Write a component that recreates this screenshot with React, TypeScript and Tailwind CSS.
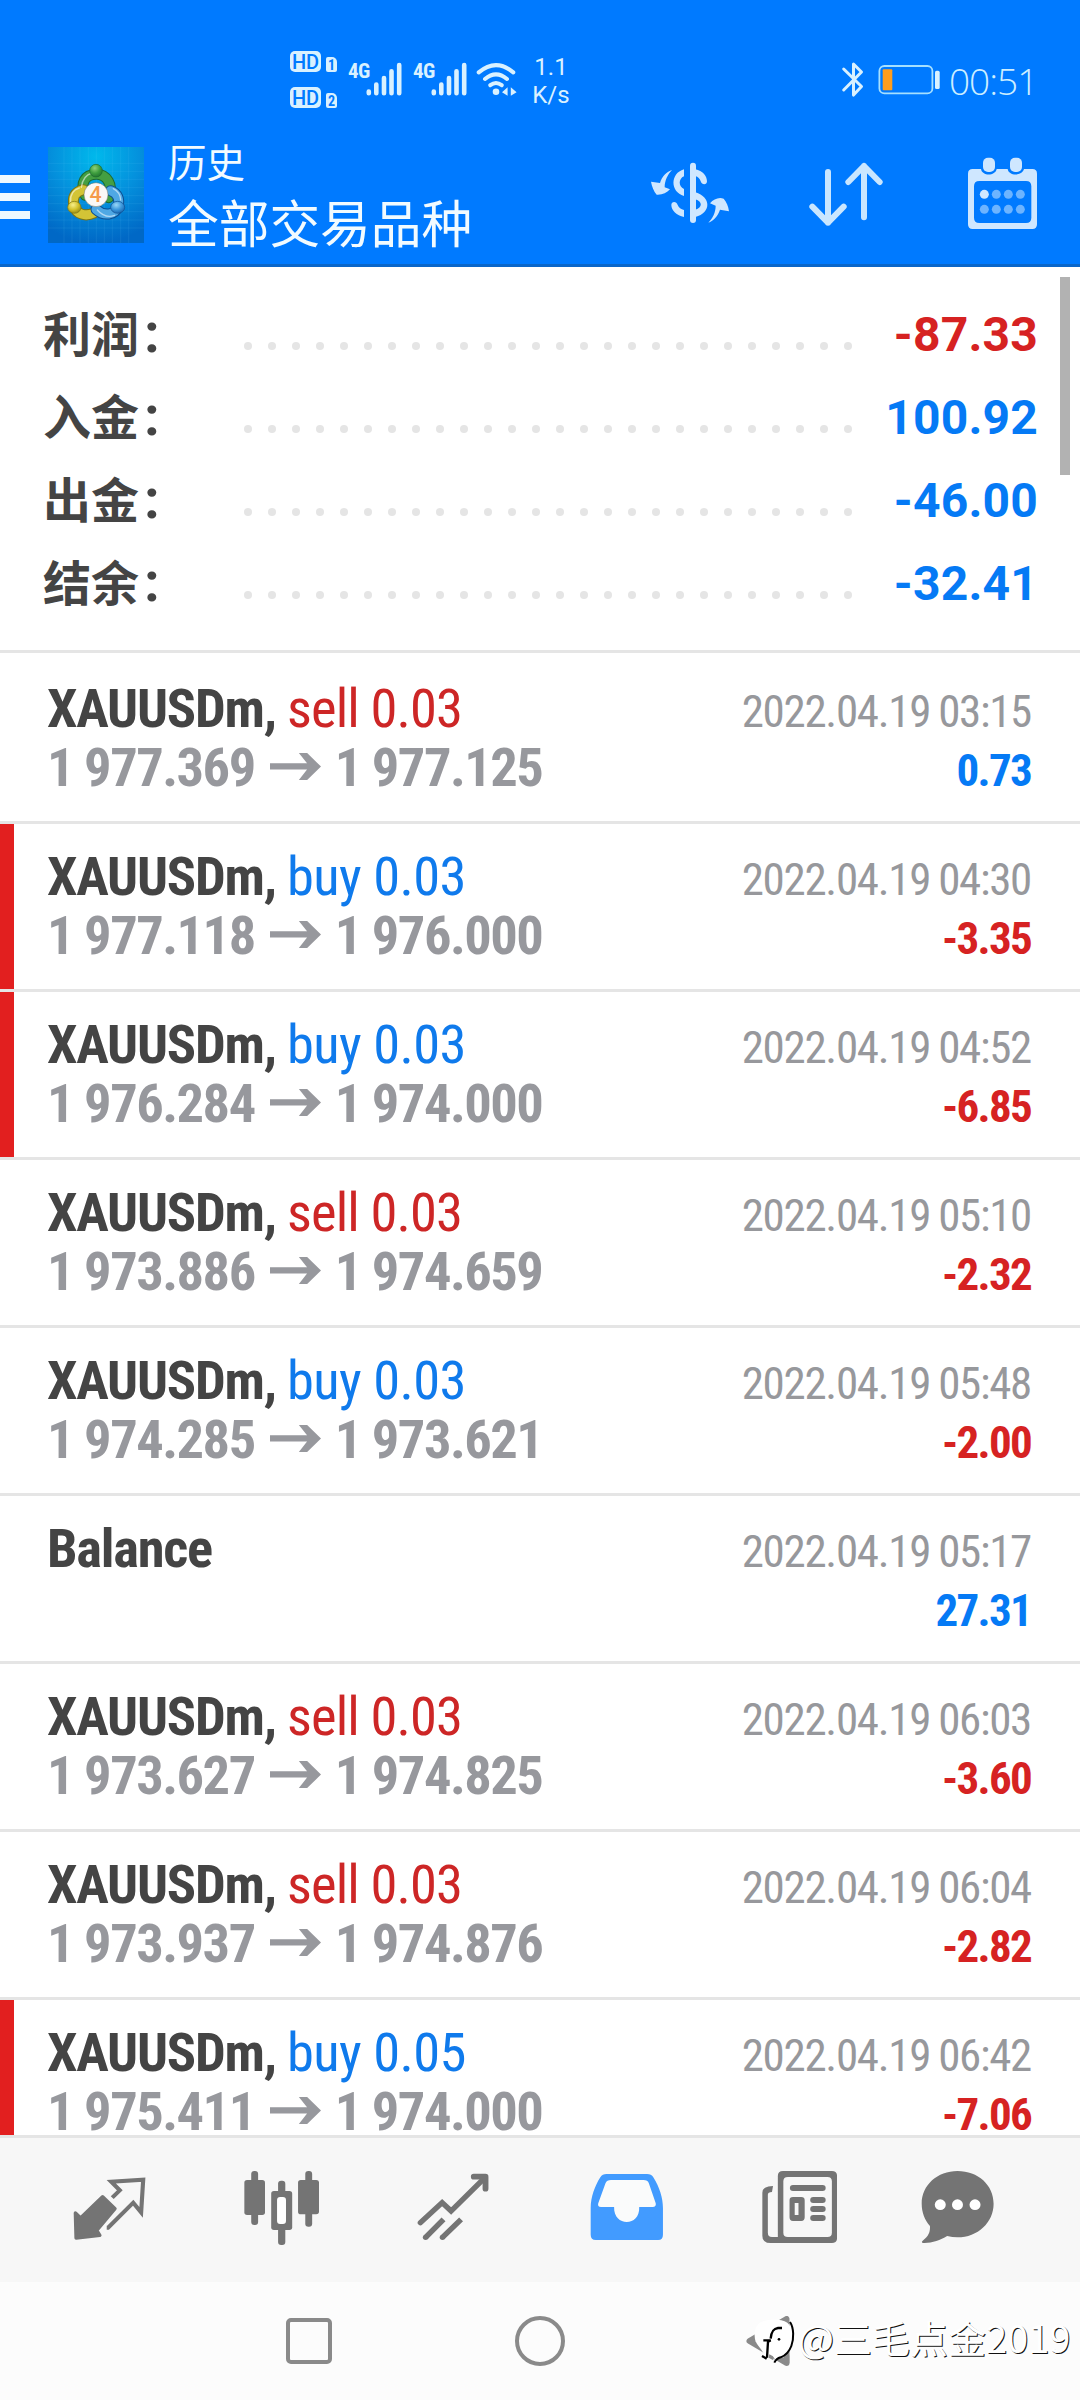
import React from 'react';
import clsx from 'clsx';

type Deal = {
  symbol: string;
  side?: 'buy' | 'sell';
  volume?: string;
  open?: string;
  close?: string;
  time: string;
  profit: string;
  stopped?: boolean;
};

const summary = [
  { label: '利润', value: '-87.33', loss: true },
  { label: '入金', value: '100.92', loss: false },
  { label: '出金', value: '-46.00', loss: false },
  { label: '结余', value: '-32.41', loss: false },
];

const deals: Deal[] = [
  { symbol: 'XAUUSDm', side: 'sell', volume: '0.03', open: '1 977.369', close: '1 977.125', time: '2022.04.19 03:15', profit: '0.73' },
  { symbol: 'XAUUSDm', side: 'buy', volume: '0.03', open: '1 977.118', close: '1 976.000', time: '2022.04.19 04:30', profit: '-3.35', stopped: true },
  { symbol: 'XAUUSDm', side: 'buy', volume: '0.03', open: '1 976.284', close: '1 974.000', time: '2022.04.19 04:52', profit: '-6.85', stopped: true },
  { symbol: 'XAUUSDm', side: 'sell', volume: '0.03', open: '1 973.886', close: '1 974.659', time: '2022.04.19 05:10', profit: '-2.32' },
  { symbol: 'XAUUSDm', side: 'buy', volume: '0.03', open: '1 974.285', close: '1 973.621', time: '2022.04.19 05:48', profit: '-2.00' },
  { symbol: 'Balance', time: '2022.04.19 05:17', profit: '27.31' },
  { symbol: 'XAUUSDm', side: 'sell', volume: '0.03', open: '1 973.627', close: '1 974.825', time: '2022.04.19 06:03', profit: '-3.60' },
  { symbol: 'XAUUSDm', side: 'sell', volume: '0.03', open: '1 973.937', close: '1 974.876', time: '2022.04.19 06:04', profit: '-2.82' },
  { symbol: 'XAUUSDm', side: 'buy', volume: '0.05', open: '1 975.411', close: '1 974.000', time: '2022.04.19 06:42', profit: '-7.06', stopped: true },
];

const SignalBars = () => (
  <svg width="36" height="34" viewBox="0 0 36 34" fill="none" stroke="#d9f1ff" strokeWidth="4.6" strokeLinecap="round">
    <path d="M2.8 29.5v1.7M10.3 22.5v8.7M18 16v15.2M25.5 9.3v21.9M33.2 3v28.2" />
  </svg>
);

const HdBadge = ({ sim }: { sim: string }) => (
  <div className="flex h-[22px] items-end">
    <span className="flex h-[21px] w-[31px] items-center justify-center rounded-[5px] bg-[#d9f1ff] text-[20px] leading-none font-medium text-[#007aff]">
      HD
    </span>
    <span className="ml-[5px] flex h-[15px] w-[11px] items-center justify-center rounded-[2px] rounded-tr-[5px] bg-[#d9f1ff] text-[14px] leading-none font-bold text-[#007aff] [font-family:'Roboto_Condensed',Roboto,sans-serif]">
      {sim}
    </span>
  </div>
);

const StatusBar = () => (
  <div className="flex h-[130px] justify-between pt-[50px] pr-[46px] pl-[290px] text-[#d9f1ff] [font-family:Roboto,sans-serif]">
    <div className="flex">
      <div className="flex flex-col gap-[14px]">
        <HdBadge sim="1" />
        <HdBadge sim="2" />
      </div>
      {[0, 1].map((i) => (
        <div key={i} className="ml-[11px] flex w-[54px] pt-[12px]">
          <span className="w-[18px] text-[21px] leading-[18px] font-bold tracking-[-0.5px] [font-family:'Roboto_Condensed',Roboto,sans-serif]">4G</span>
          <SignalBars />
        </div>
      ))}
      <svg className="mt-[10px] ml-[9px]" width="42" height="38" viewBox="476 60 42 38" fill="none" stroke="#d9f1ff" strokeWidth="4" strokeLinecap="round">
        <path d="M478.7 72.4q17.3-14.6 34.6 0M485 79q11-9.4 22 0M490.3 85.2q5.7-4.4 11.4 0" />
        <circle cx="496" cy="91.8" r="3.3" fill="#d9f1ff" stroke="none" />
        <path d="M502 92.3l5.6-5v8.5zM510.8 87.3l5.8 5-5.8 3.5z" fill="#d9f1ff" stroke="none" />
      </svg>
      <div className="ml-[13px] flex w-[40px] flex-col items-center pt-[3px] text-[24px] leading-[28px]">
        <span>1.1</span>
        <span>K/s</span>
      </div>
    </div>
    <div className="flex">
      <svg className="mt-[11px]" width="24" height="38" viewBox="841 61 24 38" fill="none" stroke="#d9f1ff" strokeWidth="3" strokeLinejoin="round" strokeLinecap="round">
        <path d="M843.7 69l17.8 17.5-8 8.6V64l8 8-17.8 18" />
      </svg>
      <svg className="mt-[14px] ml-[13px]" width="64" height="32" viewBox="878 64 64 32" fill="none">
        <rect x="879.4" y="66" width="53" height="27.4" rx="5" stroke="#a5e0ff" strokeWidth="1.8" />
        <rect x="882.7" y="69.2" width="9.6" height="21" rx="1" fill="#ff9d1e" />
        <rect x="935" y="70.8" width="4.7" height="18.2" rx="1.6" fill="#d9f1ff" />
      </svg>
      <span className="ml-[7px] w-[85px] pt-[7px] text-right text-[37px] leading-[48px] font-light tracking-[-1px] text-[#cdeeff] [font-family:'Open_Sans',sans-serif]">
        00:51
      </span>
    </div>
  </div>
);

const AppLogo = () => (
  <svg className="mt-[17px] ml-[18px]" width="96" height="96" viewBox="12 15 288 288">
    <defs>
      <radialGradient id="sky" cx="0.5" cy="0.1" r="0.9">
        <stop offset="0" stopColor="#00b9ec" />
        <stop offset="0.5" stopColor="#0491dd" />
        <stop offset="1" stopColor="#0068c6" />
      </radialGradient>
      <radialGradient id="green" cx="0.4" cy="0.3" r="0.8">
        <stop offset="0" stopColor="#8fd07a" />
        <stop offset="0.5" stopColor="#3f9f3f" />
        <stop offset="1" stopColor="#1c6a2c" />
      </radialGradient>
      <radialGradient id="yellow" cx="0.4" cy="0.3" r="0.8">
        <stop offset="0" stopColor="#f7ee8a" />
        <stop offset="0.5" stopColor="#d3c22c" />
        <stop offset="1" stopColor="#857a10" />
      </radialGradient>
      <radialGradient id="blue" cx="0.4" cy="0.3" r="0.8">
        <stop offset="0" stopColor="#9ad7f7" />
        <stop offset="0.5" stopColor="#3c98dc" />
        <stop offset="1" stopColor="#0f5aa6" />
      </radialGradient>
    </defs>
    <rect x="12" y="15" width="288" height="288" fill="url(#sky)" />
    <path
      d="M60 15v288M84 15v288M108 15v288M133 15v288M157 15v288M181 15v288M205 15v288M230 15v288M254 15v288M12 64h288M12 88h288M12 112h288M12 137h288M12 161h288M12 185h288M12 209h288M12 234h288M12 258h288"
      stroke="#7fd0ff"
      strokeOpacity="0.16"
      strokeWidth="2"
    />
    <g fill="none" strokeLinecap="round">
      <path d="M124 160C106 122 124 98 156 97s54 32 38 70" stroke="#1d6b2f" strokeWidth="33" />
      <path d="M124 160C106 122 124 98 156 97s54 32 38 70" stroke="#449f42" strokeWidth="27" />
      <path d="M118 143c-26 6-34 24-28 48 6 26 34 34 60 22" stroke="#7b7414" strokeWidth="33" />
      <path d="M118 143c-26 6-34 24-28 48 6 26 34 34 60 22" stroke="#d3c436" strokeWidth="27" />
      <path d="M200 146c22 8 28 28 22 48-10 26-42 30-66 8" stroke="#0d4f93" strokeWidth="33" />
      <path d="M200 146c22 8 28 28 22 48-10 26-42 30-66 8" stroke="#4fa8e4" strokeWidth="27" />
      <path d="M112 136c3-24 14-38 32-43M80 180c-2-20 6-36 26-42M208 140c14 7 21 20 22 34M160 204c16 18 36 22 52 16" stroke="#fff" strokeOpacity="0.55" strokeWidth="4" />
    </g>
    <circle cx="156" cy="86" r="19" fill="url(#green)" stroke="#1d6b2f" strokeWidth="2" />
    <ellipse cx="91" cy="196" rx="20" ry="18" fill="url(#yellow)" stroke="#7b7414" strokeWidth="2" />
    <ellipse cx="221" cy="196" rx="21" ry="18" fill="url(#blue)" stroke="#0d4f93" strokeWidth="2" />
    <circle cx="156" cy="158" r="36" fill="#fbf8f6" stroke="#6b6f5a" strokeWidth="1.5" />
    <text x="155" y="181" textAnchor="middle" fontSize="64" fontWeight="500" fill="#f59a4b" fontFamily="Roboto, sans-serif">
      4
    </text>
  </svg>
);

const Header = () => (
  <header className="h-[267px] border-b-[3px] border-[#0a66c9] bg-[#007aff]">
    <StatusBar />
    <div className="flex h-[134px]">
      <div className="flex w-[30px] flex-col gap-[10px] pt-[45px]">
        <div className="h-2 bg-[#eef8ff]" />
        <div className="h-2 bg-[#eef8ff]" />
        <div className="h-2 bg-[#eef8ff]" />
      </div>
      <AppLogo />
      <div className="ml-[24px] flex flex-col pt-[5px] text-[#f2fbff] [font-family:'Noto_Sans_CJK_SC',sans-serif]">
        <span className="h-[56px] text-[38.5px] leading-[50px]">历史</span>
        <span className="text-[50.7px] leading-[60px]">全部交易品种</span>
      </div>
      <div className="flex flex-1 items-start justify-end pr-[43px]">
        <svg className="mt-[32px]" width="80" height="62" viewBox="90 96 240 186" fill="#cfe7ff">
          <path d="M156 120c-15 4-30 19-36 39l-27-4c3 15 8 28 17 39 17 1 30-5 40-16l-16-6c0-20 9-39 22-52zM265 278c14-4 28-19 35-39l27 5c-2-15-7-27-16-38-16-5-30 2-41 14l17 7c0 20-9 38-22 51z" />
          <rect x="210" y="98" width="18" height="181" rx="9" />
          <path d="M192 118v21c-17 7-17 31 0 38v21c-42-12-42-68 0-80zM154 225c0-12 16-12 19 0 3 8 10 13 19 15v21c-22-4-38-20-38-36z" />
          <path d="M226 118c22 4 35 20 35 36 0 12-16 11-19 0-2-8-8-14-16-16zM226 187c48 14 48 62 0 74v-22c22-6 22-24 0-31z" />
        </svg>
        <svg className="mt-[32px] ml-[79px]" width="74" height="65" viewBox="567 96 222 195" fill="none" stroke="#c9e6ff" strokeWidth="18" strokeLinecap="round" strokeLinejoin="round">
          <path d="M624 126v152M577 230l47 48 47-48M732 262V108M685 156l47-48 47 48" />
        </svg>
        <svg className="mt-[27px] ml-[85px]" width="69" height="73" viewBox="1044 81 207 219" fill="#cfe7ff">
          <path
            fillRule="evenodd"
            d="M1058 117h25c3 22 43 22 47 0h33c3 22 43 22 49 0h25q14 0 14 14v152q0 14-14 14h-179q-14 0-14-14V131q0-14 14-14zM1078 153q-16 0-16 16v94q0 16 16 16h140q16 0 16-16v-94q0-16-16-16z"
          />
          <rect x="1089" y="83" width="36" height="43" rx="15" />
          <rect x="1170" y="83" width="36" height="43" rx="15" />
          <circle cx="1093" cy="193" r="13.5" />
          <g fill="#6db4ff">
            <circle cx="1129" cy="193" r="13.5" />
            <circle cx="1165" cy="193" r="13.5" />
            <circle cx="1201" cy="193" r="13.5" />
            <circle cx="1093" cy="238" r="13.5" />
            <circle cx="1129" cy="238" r="13.5" />
            <circle cx="1165" cy="238" r="13.5" />
            <circle cx="1201" cy="238" r="13.5" />
          </g>
        </svg>
      </div>
    </div>
  </header>
);

const Summary = () => (
  <section className="relative h-[386px] border-b-[3px] border-[#e5e5e5] pt-[22px]">
    {summary.map((row) => (
      <div key={row.label} className="flex h-[83px] items-baseline pr-[42px] pl-[43px] leading-[83px]">
        <span className="w-[201px] translate-y-px text-[48px] font-bold text-[#444] [font-family:'Noto_Sans_CJK_SC',sans-serif]">
          {row.label}
          <span className="ml-[5px] text-[56px] leading-none [font-family:Roboto,sans-serif]">:</span>
        </span>
        <div className="mt-[53px] flex w-[608px] justify-between self-start">
          {Array.from({ length: 26 }, (_, i) => (
            <span key={i} className="size-2 rounded-full bg-[#e5e5e5]" />
          ))}
        </div>
        <span
          className={clsx(
            'flex-1 text-right text-[48px] font-bold tracking-[0.2px] [font-family:Roboto,sans-serif]',
            row.loss ? 'text-[#d62222]' : 'text-[#057af5]'
          )}
        >
          {row.value}
        </span>
      </div>
    ))}
    <div className="absolute top-[10px] right-[10px] h-[198px] w-[10px] bg-[#b2b2b2]" />
  </section>
);

const DealRow = ({ deal }: { deal: Deal }) => (
  <div className="relative h-[168px] shrink-0 border-b-[3px] border-[#e5e5e5] pt-[23px] pr-[48px] pl-[47px]">
    {deal.stopped && <div className="absolute top-0 left-0 h-[165px] w-[14px] bg-[#e21f1f]" />}
    <div className="flex h-[59px] items-baseline justify-between leading-[59px]">
      <div className="text-[54.5px]">
        <span className="font-bold tracking-[-1.25px] text-[#444]">
          {deal.symbol}
          {deal.side && ', '}
        </span>
        {deal.side && (
          <span className={deal.side === 'sell' ? 'tracking-[-0.9px] text-[#cd2626]' : 'tracking-[-0.6px] text-[#0f7aec]'}>
            {deal.side} {deal.volume}
          </span>
        )}
      </div>
      <span className="mr-px text-[45px] tracking-[-1.3px] text-[#97989c] [word-spacing:-1px]">{deal.time}</span>
    </div>
    <div className="flex h-[59px] items-baseline justify-between leading-[59px]">
      {deal.open && (
        <div className="flex items-baseline text-[54.5px] font-bold tracking-[-1.5px] text-[#97989d]">
          <span>{deal.open}</span>
          <svg className="mr-[14px] ml-[15px]" width="51" height="33" viewBox="0 0 53 33" preserveAspectRatio="none" fill="#97989d">
            <path d="M0 10.3h38.5L30 0h8.6L53 13.6 38.6 27H30l8.5-10.4H0z" />
          </svg>
          <span>{deal.close}</span>
        </div>
      )}
      <span
        className={clsx(
          'mr-px ml-auto text-[45px] font-bold tracking-[-1.7px]',
          !deal.open && 'translate-y-[3px]',
          deal.profit.startsWith('-') ? 'text-[#d62222]' : 'text-[#057af5]'
        )}
      >
        {deal.profit}
      </span>
    </div>
  </div>
);

const TabBar = () => (
  <nav className="flex h-[147px] border-t-[3px] border-[#e5e5e5] bg-[#f7f7f7] pt-[32px] pl-[73px] text-[#747474]">
    <svg width="73.3" height="76" viewBox="213 150 213 228" preserveAspectRatio="none" fill="none" stroke="currentColor">
      <path d="M299 230l36 36-53 65 9 15-69 8-2-75 15 15z" fill="currentColor" strokeWidth="10" strokeLinejoin="round" />
      <path d="M327 233l22-22-25-26 93-6-6 98-23-29-73 75h-4" strokeWidth="12" />
    </svg>
    <svg className="ml-[97.5px]" width="75.4" height="76" viewBox="708 150 219 228" preserveAspectRatio="none" fill="currentColor">
      <rect x="729" y="153" width="20" height="162" rx="9" />
      <rect x="709" y="180" width="60" height="105" rx="8" />
      <rect x="886" y="153" width="20" height="167" rx="9" />
      <rect x="865" y="180" width="61" height="103" rx="8" />
      <rect x="807" y="182" width="21" height="193" rx="9" />
      <rect x="787" y="213" width="61" height="117" rx="8" />
      <rect x="804" y="231" width="26" height="81" rx="9" fill="#fff" />
    </svg>
    <svg className="ml-[98.2px]" width="72.3" height="76" viewBox="1212 150 210 228" preserveAspectRatio="none" fill="none" stroke="currentColor" strokeWidth="16">
      <path d="M1222 308l63-60 26 25 99-101" strokeLinecap="round" />
      <path d="M1377 170h34v36" strokeWidth="17" strokeLinecap="round" strokeLinejoin="round" />
      <path d="M1237 352l52-54M1286 352l54-54" />
      <circle cx="1237" cy="352" r="8" fill="currentColor" stroke="none" />
      <circle cx="1286" cy="352" r="8" fill="currentColor" stroke="none" />
    </svg>
    <svg className="ml-[100px]" width="73.3" height="76" viewBox="144 150 213 228" preserveAspectRatio="none" fill="#429bff">
      <path d="M192 162h118q12 0 18 10c18 30 28 62 28 92v80q0 16-14 16H161q-15 0-15-16v-80c0-32 12-66 28-92q6-10 18-10z" />
      <path d="M205 180h94q13 0 16 10l20 60q2 11-9 11h-39c3 60-75 60-73 0h-38q-11 0-8-11l21-60q4-10 16-10z" fill="#fafbfb" />
    </svg>
    <svg className="ml-[99px]" width="75.4" height="76" viewBox="645 150 219 228" preserveAspectRatio="none" fill="currentColor">
      <path fillRule="evenodd" d="M706 153h142q15 0 15 15v186q0 15-15 15H670q-24 0-24-22V218q0-20 31-20l-3 18q-12 0-12 8v114q0 13 12 13h17V168q0-15 15-15zM720 171q-13 0-13 13v154q0 13 13 13h115q13 0 13-13V184q0-13-13-13z" />
      <rect x="726" y="195" width="104" height="18" rx="9" />
      <path fillRule="evenodd" d="M735 231h24q10 0 10 10v51q0 11-10 11h-24q-10 0-10-11v-51q0-10 10-10zM740 249v36h11v-36z" />
      <rect x="785" y="231" width="45" height="18" rx="9" />
      <rect x="785" y="258" width="45" height="18" rx="9" />
      <rect x="785" y="285" width="45" height="18" rx="9" />
    </svg>
    <svg className="ml-[83.5px]" width="73.3" height="76" viewBox="1107 150 213 228" preserveAspectRatio="none" fill="currentColor">
      <path d="M1213 153c60 0 105 42 105 98s-46 101-105 101q-15 0-30-4c-20 12-45 22-69 21q-8-2-2-7c18-14 22-28 21-44-15-18-24-41-24-67 0-56 46-98 104-98z" />
      <circle cx="1163" cy="254" r="16" fill="#fff" />
      <circle cx="1213" cy="254" r="16" fill="#fff" />
      <circle cx="1264" cy="254" r="16" fill="#fff" />
    </svg>
  </nav>
);

const SystemNav = () => (
  <div className="relative flex h-[118px] items-start bg-[#fcfcfc] pt-[34px] pl-[286px]">
    <div className="mt-[2px] size-[46px] rounded-[5px] border-[4.5px] border-[#8a8a8a]" />
    <div className="ml-[183px] size-[50px] rounded-full border-[4.5px] border-[#8a8a8a]" />
    <svg className="ml-[181px]" width="46" height="50" viewBox="0 0 46 50" fill="none" stroke="#8a8a8a" strokeWidth="6" strokeLinejoin="round">
      <path d="M3.5 25L40.5 3v44z" />
    </svg>
    <div className="absolute top-[30px] left-[752px] flex items-start">
      <svg width="46" height="56" viewBox="36 36 138 168">
        <path d="M64 66c20-10 60-10 78 2 14 12 18 40 12 66-5 24-22 36-48 46l-6-10c-10 2-20-2-28-6-8-22-28-30-28-56-2-20 8-36 20-42z" fill="#fff" />
        <path d="M150 66c12 18 12 50 4 72-6 16-16 28-32 34-8 2-14 6-19 16" fill="none" stroke="#000" strokeWidth="6" />
        <path d="M126 84h-12c-14 2-20 10-22 32M70 121h22l-8 4-3 48M66 168l14 8" fill="none" stroke="#000" strokeWidth="7" />
        <path d="M88 163l11 6 1 12-14-8zM134 178l14-12v24l-20-4z" fill="#8a8a8a" />
        <circle cx="117" cy="118" r="4" fill="#000" />
      </svg>
      <span className="text-[38px] leading-[49px] whitespace-nowrap text-white [font-family:'Noto_Sans_CJK_SC',sans-serif] [text-shadow:1px_1px_0_#111]">
        @三毛点金2019
      </span>
    </div>
  </div>
);

export default function App() {
  return (
    <div className="flex h-[2400px] w-[1080px] flex-col overflow-hidden bg-white">
      <Header />
      <Summary />
      <main className="flex h-[1482px] flex-col overflow-hidden pt-[3px] [font-family:'Roboto_Condensed',Roboto,sans-serif]">
        {deals.map((deal) => (
          <DealRow key={deal.time} deal={deal} />
        ))}
      </main>
      <TabBar />
      <SystemNav />
    </div>
  );
}
